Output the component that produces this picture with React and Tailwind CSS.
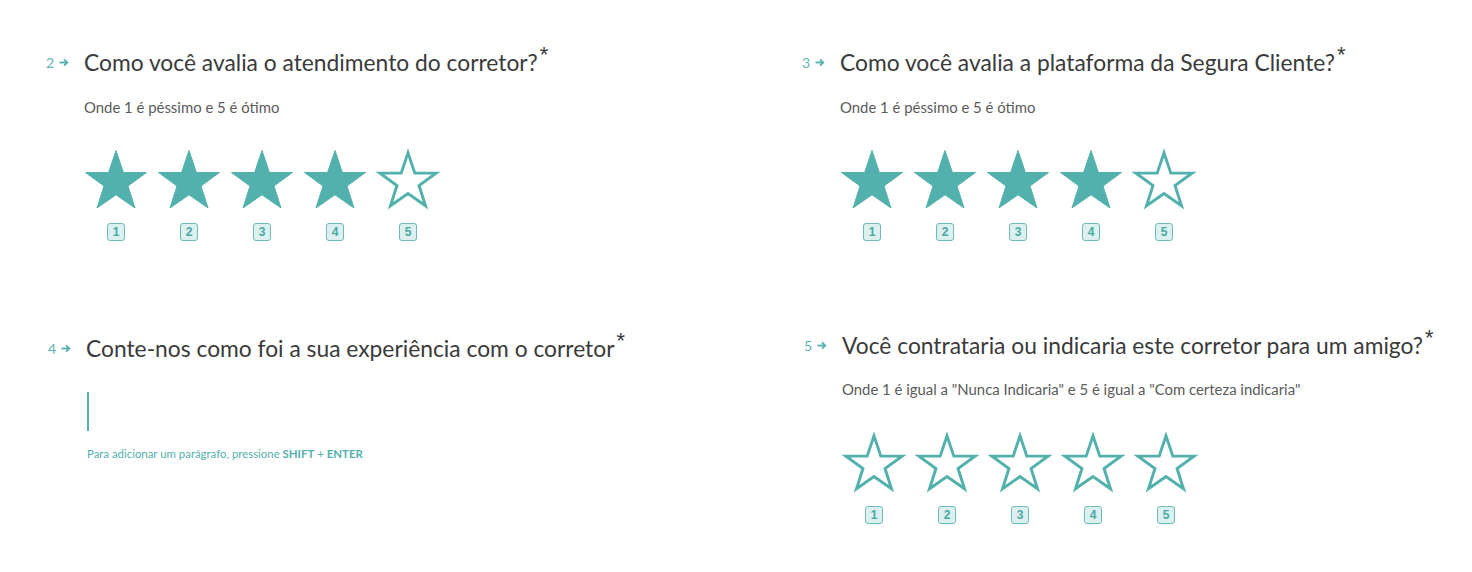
import React from "react";

const TEAL = "#52b1ac";

function Star({ filled }) {
  return (
    <svg width="64" height="61" viewBox="0 0 64 61" className="overflow-visible">
      <polygon
        points="32,1.5 39.4,23.5 62.5,23.5 44,37 51,59 32,45.8 13,59 20,37 1.5,23.5 24.6,23.5"
        fill={filled ? TEAL : "#ffffff"}
        stroke={TEAL}
        strokeWidth={filled ? 1 : 3.2}
        strokeLinejoin="miter"
        transform={filled ? undefined : "translate(32 31) scale(0.92) translate(-32 -31)"}
      />
    </svg>
  );
}

function Arrow() {
  return (
    <svg width="10" height="9" viewBox="0 0 10 9" className="ml-[5px]">
      <path d="M0.5 4.5 H8" stroke={TEAL} strokeWidth="1.8" />
      <path d="M5 1.3 L8.3 4.5 L5 7.7" stroke={TEAL} strokeWidth="1.8" fill="none" />
    </svg>
  );
}

function Header({ n, title }) {
  return (
    <div className="flex items-center h-[28px]">
      <div className="flex items-center w-[38px] text-[14px] text-[#5bb5b0]">
        <span>{n}</span>
        <Arrow />
      </div>
      <h2 className="text-[22.8px] leading-[28px] text-[#3a3a3a]">
        {title}
        <span className="relative -top-[9px] ml-[2px] text-[22px] leading-[0] font-['Liberation_Sans',sans-serif]">*</span>
      </h2>
    </div>
  );
}

function Rating({ value }) {
  return (
    <div className="flex gap-[9px] ml-[38px]">
      {[1, 2, 3, 4, 5].map((i) => (
        <div key={i} className="flex flex-col items-center w-[64px]">
          <Star filled={i <= value} />
          <span className="mt-[13px] flex items-center justify-center w-[18px] h-[18px] rounded-[3px] border border-[#6dbcb7] bg-[#dcf0ef] text-[12px] font-bold text-[#4aa9a4] font-['Liberation_Sans',sans-serif]">
            {i}
          </span>
        </div>
      ))}
    </div>
  );
}

function Subtitle({ children }) {
  return (
    <p className="ml-[38px] text-[14.9px] leading-[20px] text-[#5a5a5a]">{children}</p>
  );
}

export default function App() {
  return (
    <div className="w-[1472px] h-[572px] bg-white font-['Lato',sans-serif] pl-[46px] pt-[48px]">
      <div className="grid grid-cols-[756px_1fr] gap-y-[90px]">
        <div>
          <Header n={2} title="Como você avalia o atendimento do corretor?" />
          <div className="mt-[21px]">
            <Subtitle>Onde 1 é péssimo e 5 é ótimo</Subtitle>
          </div>
          <div className="mt-[32px]">
            <Rating value={4} />
          </div>
        </div>
        <div>
          <Header n={3} title="Como você avalia a plataforma da Segura Cliente?" />
          <div className="mt-[21px]">
            <Subtitle>Onde 1 é péssimo e 5 é ótimo</Subtitle>
          </div>
          <div className="mt-[32px]">
            <Rating value={4} />
          </div>
        </div>
        <div className="pl-[2px] pt-[3px]">
          <Header n={4} title="Conte-nos como foi a sua experiência com o corretor" />
          <div className="ml-[39px] mt-[30px] w-[2px] h-[39px] bg-[#52b1ac]"></div>
          <p className="ml-[39px] mt-[14px] text-[11.4px] text-[#52b1ac]">
            Para adicionar um parágrafo, pressione <b>SHIFT</b> + <b>ENTER</b>
          </p>
        </div>
        <div className="pl-[2px]">
          <Header n={5} title="Você contrataria ou indicaria este corretor para um amigo?" />
          <div className="mt-[20px]">
            <Subtitle>Onde 1 é igual a "Nunca Indicaria" e 5 é igual a "Com certeza indicaria"</Subtitle>
          </div>
          <div className="mt-[33px]">
            <Rating value={0} />
          </div>
        </div>
      </div>
    </div>
  );
}
